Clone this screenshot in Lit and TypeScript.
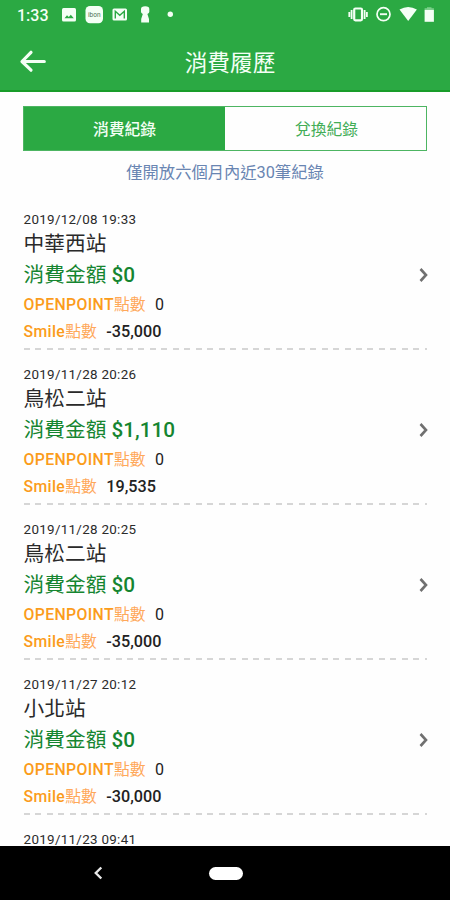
import { LitElement, html, css } from "lit";
import { customElement, property } from "lit/decorators.js";

interface Entry {
  time: string;
  station: string;
  amount: string;
  openpoint: string;
  smile: string;
}

const ENTRIES: Entry[] = [
  { time: "2019/12/08 19:33", station: "中華西站", amount: "$0", openpoint: "0", smile: "-35,000" },
  { time: "2019/11/28 20:26", station: "鳥松二站", amount: "$1,110", openpoint: "0", smile: "19,535" },
  { time: "2019/11/28 20:25", station: "鳥松二站", amount: "$0", openpoint: "0", smile: "-35,000" },
  { time: "2019/11/27 20:12", station: "小北站", amount: "$0", openpoint: "0", smile: "-30,000" },
];

const NEXT_TIME = "2019/11/23 09:41";

@customElement("status-bar")
class StatusBar extends LitElement {
  static styles = css`
    :host { display: flex; justify-content: space-between; height: 30px; color: #f4fff5; }
    svg { display: block; }
    .clock { font: 500 16px/31px Roboto, sans-serif; width: 44px; padding-left: 17px; }
    .left { display: flex; }
  `;
  render() {
    return html`
      <div class="left">
        <span class="clock">1:33</span>
        <svg width="120" height="30" viewBox="61 0 120 30" fill="#f4fff5">
          <rect x="62" y="8" width="14" height="13.5" rx="1.5" />
          <path d="M64.5 18.3l2.5-3 1.8 1.8 2-2.4 3 3.6z" fill="#2ba943" />
          <rect x="85.5" y="6" width="17.5" height="17.2" rx="4.5" />
          <text x="94.3" y="17" text-anchor="middle" font-family="Roboto, sans-serif" font-size="6.5" fill="#4c7056">ibon</text>
          <rect x="112.5" y="8.5" width="14.5" height="12" rx="1.5" />
          <path d="M115.3 18.5v-7.3l4.5 4 4.5-4v7.3" fill="none" stroke="#2ba943" stroke-width="1.4" />
          <path d="M141 9q0-2.8 4.2-2.8T149.3 9v3q0 1.3-1.9 1.9l1.6 5v3.6h-7.8V19l1.6-5.1q-1.8-.6-1.8-1.9z" />
          <circle cx="170.3" cy="14.3" r="2.7" />
        </svg>
      </div>
      <svg width="102" height="30" viewBox="348 0 102 30" fill="#f4fff5">
        <rect x="354.2" y="8.5" width="7.8" height="11.8" rx="1.2" fill="none" stroke="#f4fff5" stroke-width="2.2" />
        <path d="M351.6 10v9M364.6 10v9M349.3 12v5M366.9 12v5" stroke="#f4fff5" stroke-width="1.8" />
        <circle cx="383.5" cy="14.2" r="6.5" fill="none" stroke="#f4fff5" stroke-width="1.7" />
        <path d="M380 14.2h7" stroke="#f4fff5" stroke-width="1.9" />
        <path d="M399.5 9.6q8.7-5 17.4 0L408.2 21z" />
        <path d="M424.6 10h9.3v11.8h-9.3z" />
        <path d="M424.6 8.3h2.4v-1.1h4.5v1.1h2.4V10h-9.3z" fill="#7bcf8a" />
      </svg>
    `;
  }
}

@customElement("history-item")
class HistoryItem extends LitElement {
  @property({ attribute: false }) entry!: Entry;
  static styles = css`
    :host { display: block; height: 155px; flex: none; box-sizing: border-box; padding: 16px 22px 0 23px; }
    .body { display: flex; align-items: center; justify-content: space-between; height: 134px; padding-left: 0.6px; }
    .time { font-size: 13.4px; letter-spacing: 0.3px; line-height: 18px; height: 19px; color: #2b2b2b; }
    .station { font-size: 20.7px; line-height: 28px; height: 28px; color: #2a2a2a; }
    .amount { font-size: 20.7px; line-height: 34px; height: 34px; color: #158530; white-space: pre; }
    .points { display: flex; font-size: 15.8px; line-height: 26px; height: 26px; color: #ffa85a; }
    .smile { line-height: 27px; height: 27px; }
    .latin { font-weight: 500; }
    .brand { color: #fb9c1b; letter-spacing: 0.35px; }
    .value { color: #222; margin-left: 9.5px; font-size: 16px; }
    .smile .value { font-size: 16.2px; }
    .arrow { margin-bottom: 4px; }
    .dash { height: 2px; margin: 3px 1px 0;
      background: repeating-linear-gradient(90deg, #d6d6d6 0 6px, transparent 6px 11.45px); }
  `;
  render() {
    const e = this.entry;
    return html`
      <div class="body">
        <div>
          <div class="time">${e.time}</div>
          <div class="station">${e.station}</div>
          <div class="amount">消費金額<span class="latin"> ${e.amount}</span></div>
          <div class="points"><span class="latin brand">OPENPOINT</span>點數<span class="value">${e.openpoint}</span></div>
          <div class="points smile"><span class="latin brand">Smile</span>點數<span class="value latin">${e.smile}</span></div>
        </div>
        <svg class="arrow" width="10" height="16" viewBox="0 0 10 16" fill="none" stroke="#707070" stroke-width="2.6">
          <path d="M2.5 1L8 7L2.5 13" />
        </svg>
      </div>
      <div class="dash"></div>
    `;
  }
}

@customElement("app-root")
class AppRoot extends LitElement {
  static styles = css`
    :host { display: flex; flex-direction: column; width: 450px; height: 900px; overflow: hidden; background: #fefefe;
      font-family: Roboto, "Noto Sans CJK TC", sans-serif; }
    .top { background: #2ba943; height: 92px; flex: none; box-sizing: border-box; border-bottom: 2px solid #189c29; }
    .bar { display: grid; grid-template-columns: 60px 1fr 50px; height: 60px; align-items: center; color: #f4fff5; }
    .bar svg { margin-left: 19px; margin-top: 2px; }
    .title { text-align: center; font-size: 22.7px; line-height: 32px; padding-top: 8px; }
    .tabs { display: grid; grid-template-columns: 1fr 1fr; margin: 14px 23px 0; height: 45px; flex: none; box-sizing: border-box;
      border: 1px solid #4db562; font-size: 15.8px; line-height: 45px; text-align: center; color: #43ad57; }
    .tabs div { height: 43px; }
    .active { background: #2ba943; color: #f4fff5; font-weight: 500; }
    .tabs div:last-child { padding-left: 2px; }
    .note { text-align: center; font-size: 16.3px; line-height: 24px; height: 24px; margin-top: 10px; flex: none; color: #6985b2; }
    .list { flex: 1; min-height: 0; overflow: hidden; display: flex; flex-direction: column; padding-top: 10px; }
    .next { padding: 16px 23.6px 0; font-size: 13.4px; letter-spacing: 0.3px; line-height: 18px; color: #2b2b2b; }
    .nav { height: 54px; flex: none; background: #000; display: grid; grid-template-columns: 209px 34px 1fr; align-items: center; }
    .nav svg { margin-left: 93px; }
    .pill { height: 13px; border-radius: 7px; background: #fff; }
  `;
  render() {
    return html`
      <div class="top">
        <status-bar></status-bar>
        <div class="bar">
          <svg width="30" height="24" viewBox="0 0 30 24" fill="none" stroke="#f4fff5" stroke-width="3.2" stroke-linecap="round" stroke-linejoin="round">
            <path d="M12 3.3L3 12.5l9 8.7M3.4 12.5H25.3" />
          </svg>
          <div class="title">消費履歷</div>
        </div>
      </div>
      <div class="tabs"><div class="active">消費紀錄</div><div>兌換紀錄</div></div>
      <div class="note">僅開放六個月內近30筆紀錄</div>
      <div class="list">
        ${ENTRIES.map((e) => html`<history-item .entry=${e}></history-item>`)}
        <div class="next">${NEXT_TIME}</div>
      </div>
      <div class="nav">
        <svg width="12" height="14" viewBox="0 0 12 14" fill="none" stroke="#e8e8e8" stroke-width="2.4">
          <path d="M8.3 1.5L2.8 7l5.5 5.5" />
        </svg>
        <div class="pill"></div>
      </div>
    `;
  }
}
